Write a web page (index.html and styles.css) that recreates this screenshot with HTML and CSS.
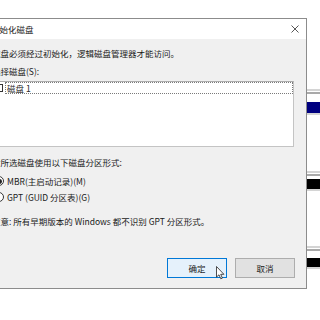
FILE: index.html
```html
<!DOCTYPE html>
<html lang="zh-CN">
<head>
<meta charset="utf-8">
<title>初始化磁盘</title>
<link rel="stylesheet" href="styles.css">
</head>
<body>
<div class="screen">
  <div class="stage">
    <div class="dialog">
      <div class="titlebar">
        <span class="title">初始化磁盘</span>
        <svg class="close" width="8" height="8" viewBox="0 0 8 8"><path d="M0.5 0.5 L7.5 7.5 M7.5 0.5 L0.5 7.5" stroke="#444" stroke-width="0.9" fill="none"/></svg>
      </div>
      <div class="body">
        <p class="line">磁盘必须经过初始化，逻辑磁盘管理器才能访问。</p>
        <p class="line label">选择磁盘(S):</p>
        <div class="listbox">
          <div class="item">
            <span class="check"></span>
            <span class="focus">磁盘 1</span>
          </div>
        </div>
        <p class="line group">对所选磁盘使用以下磁盘分区形式:</p>
        <div class="radio first"><span class="dot checked"></span>MBR(主启动记录)(M)</div>
        <div class="radio second"><span class="dot"></span>GPT (GUID 分区表)(G)</div>
        <p class="line note">注意: 所有早期版本的 Windows 都不识别 GPT 分区形式。</p>
        <div class="buttons">
          <button class="btn primary">确定</button>
          <button class="btn">取消</button>
        </div>
      </div>
    </div>
  </div>
  <div class="strip">
    <div class="gap g89"></div>
    <div class="bar light"></div>
    <div class="gap g1"></div>
    <div class="bar mid"></div>
    <div class="gap g8"></div>
    <div class="band navy"></div>
    <div class="bar light"></div>
    <div class="gap g56"></div>
    <div class="bar light"></div>
    <div class="gap g1"></div>
    <div class="bar mid"></div>
    <div class="gap g3"></div>
    <div class="band black"></div>
    <div class="bar light"></div>
    <div class="gap g55"></div>
    <div class="bar light"></div>
    <div class="gap g1"></div>
    <div class="bar mid"></div>
    <div class="gap g7"></div>
    <div class="band black short"></div>
    <div class="bar light"></div>
  </div>
  <svg class="cursor" width="10" height="14" viewBox="0 0 10 14"><path d="M0.5 0.5 L0.5 11 L3 8.8 L4.8 12.8 L6.4 12.1 L4.7 8.3 L7.9 8.3 Z" fill="#fff" stroke="#222" stroke-width="0.8" stroke-linejoin="round"/></svg>
</div>
</body>
</html>
```

FILE: styles.css
```css
* { box-sizing: border-box; }
html, body { margin: 0; padding: 0; background: #fff; }
.screen {
  position: relative;
  width: 320px;
  height: 320px;
  overflow: hidden;
  display: flex;
  background: #fff;
  font-family: "Noto Sans CJK SC", "Noto Sans", sans-serif;
  font-size: 8.5px;
  line-height: 12px;
  color: #1a1a1a;
}
.stage { width: 307px; flex: none; }
.dialog {
  margin-top: 18px;
  margin-left: -17px;
  width: 324px;
  border: 1px solid #8c8c8c;
  background: #f0f0f0;
}
.titlebar {
  height: 20px;
  background: #fff;
  display: flex;
  align-items: center;
  justify-content: space-between;
  padding: 0 7px 0 7px;
}
.title { line-height: 20px; }
.close { display: block; }
.body { padding: 8px 11px 10px 8px; }
.line { margin: 0; white-space: nowrap; }
.label { margin-top: 6px; }
.listbox {
  margin-top: 4px;
  margin-right: 1px;
  height: 66px;
  background: #fff;
  border: 1px solid #acacac;
  border-right-color: #c4c4c4;
  border-bottom-color: #c4c4c4;
}
.item { display: flex; align-items: center; height: 12px; padding-left: 2px; }
.check {
  width: 8px;
  height: 8px;
  border: 1px solid #333;
  background: #fff;
  flex: none;
}
.focus {
  margin-left: 2px;
  flex: 1;
  height: 12px;
  line-height: 10px;
  padding-left: 1px;
  border: 1px dotted #7a7a7a;
  color: #2a2a2a;
}
.group { margin-top: 9px; }
.radio {
  display: flex;
  align-items: center;
  height: 12px;
  white-space: nowrap;
  padding-left: 2px;
}
.radio.first { margin-top: 7px; }
.radio.second { margin-top: 4px; }
.dot {
  width: 10px;
  height: 10px;
  border: 1px solid #333;
  border-radius: 50%;
  background: #fff;
  margin-right: 3px;
  flex: none;
  display: flex;
  align-items: center;
  justify-content: center;
}
.dot.checked::after {
  content: "";
  width: 5px;
  height: 5px;
  border-radius: 50%;
  background: #222;
}
.note { margin-top: 12px; }
.buttons {
  margin-top: 31px;
  display: flex;
  justify-content: flex-end;
  gap: 8px;
}
.btn {
  width: 60px;
  height: 20px;
  padding: 0;
  font: inherit;
  color: #1a1a1a;
  background: #e1e1e1;
  border: 1px solid #adadad;
}
.btn.primary { background: #e5f1fb; border-color: #0078d7; }
.strip { width: 13px; flex: none; display: flex; flex-direction: column; }
.gap { flex: none; }
.g1 { height: 1px; }
.g3 { height: 3px; }
.g7 { height: 7px; }
.g8 { height: 8px; }
.g55 { height: 55px; }
.g56 { height: 56px; }
.g89 { height: 89px; }
.bar { height: 2px; flex: none; }
.bar.light { background: #d4d4d4; }
.bar.mid { background: #a9a9a9; }
.band { height: 11px; flex: none; }
.band.navy { background: #000080; }
.band.black { background: #000; height: 10px; }
.band.short { height: 9px; }
.cursor { position: absolute; left: 216px; top: 266px; }
```
